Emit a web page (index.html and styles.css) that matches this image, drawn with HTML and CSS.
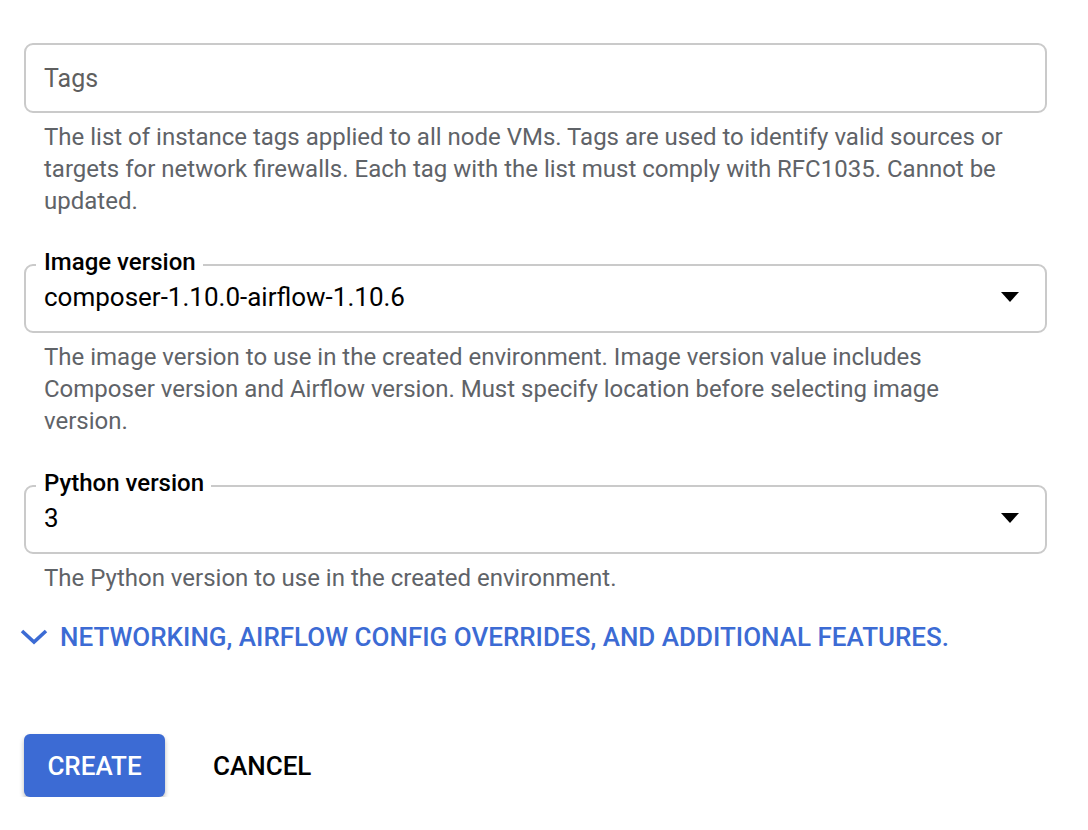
FILE: index.html
```html
<!DOCTYPE html>
<html>
<head>
<meta charset="utf-8">
<link rel="stylesheet" href="styles.css">
</head>
<body>
<div class="form">
  <div class="field">
    <div class="box plain"><span class="placeholder">Tags</span></div>
    <p class="help">The list of instance tags applied to all node VMs. Tags are used to identify valid sources or targets for network firewalls. Each tag with the list must comply with RFC1035. Cannot be updated.</p>
  </div>
  <div class="field middle">
    <fieldset class="box outlined">
      <legend class="label">Image version</legend>
      <div class="select-row"><span class="value">composer-1.10.0-airflow-1.10.6</span><span class="arrow"></span></div>
    </fieldset>
    <p class="help">The image version to use in the created environment. Image version value includes Composer version and Airflow version. Must specify location before selecting image version.</p>
  </div>
  <div class="field last">
    <fieldset class="box outlined">
      <legend class="label">Python version</legend>
      <div class="select-row"><span class="value">3</span><span class="arrow"></span></div>
    </fieldset>
    <p class="help">The Python version to use in the created environment.</p>
  </div>
  <div class="expander">
    <svg class="chev" width="28" height="18" viewBox="0 0 28 18"><path d="M2 3 L14 14 L26 3" fill="none" stroke="#3c6bd4" stroke-width="3.6"/></svg>
    <span>NETWORKING, AIRFLOW CONFIG OVERRIDES, AND ADDITIONAL FEATURES.</span>
  </div>
  <div class="actions">
    <button class="btn primary">CREATE</button>
    <button class="btn flat">CANCEL</button>
  </div>
</div>
</body>
</html>
```
FILE: styles.css
```css
html, body {
  margin: 0;
  padding: 0;
  background: #fff;
}
body {
  font-family: Roboto, "Liberation Sans", sans-serif;
}
.form {
  width: 1023px;
  padding: 43px 0 0 24px;
}
.field {
  margin-bottom: 31px;
}
.field.middle {
  margin-bottom: 32px;
}
.field.last {
  margin-bottom: 27px;
}
.box {
  box-sizing: border-box;
  border: 2px solid #cacaca;
  border-radius: 9px;
  margin: 0;
}
.plain {
  height: 70px;
  padding: 0 18px;
  display: flex;
  align-items: center;
}
.placeholder {
  font-size: 25px;
  color: #5f5f5f;
}
.outlined {
  padding: 0 26px 0 18px;
  height: 85px;
  min-width: 0;
}
.label {
  font-size: 24px;
  font-weight: 500;
  color: #000;
  line-height: 28px;
  padding: 0 7px 6px 8px;
  margin-left: -8px;
}
.select-row {
  display: flex;
  align-items: center;
  justify-content: space-between;
  height: 36px;
  margin-top: -3px;
}
.value {
  font-size: 26px;
  color: #000;
}
.arrow {
  width: 0;
  height: 0;
  border-left: 9px solid transparent;
  border-right: 9px solid transparent;
  border-top: 10px solid #000;
}
.help {
  margin: 8px 0 0 0;
  padding: 0 26px 0 20px;
  font-size: 24px;
  line-height: 32px;
  color: #5f6368;
}
.expander {
  display: flex;
  align-items: center;
  gap: 12px;
  margin-left: -4px;
  color: #3c6bd4;
  font-size: 26px;
  font-weight: 500;
  height: 32px;
}
.chev {
  display: block;
}
.actions {
  display: flex;
  align-items: center;
  gap: 22px;
  margin-top: 81px;
}
.btn {
  font-family: Roboto, "Liberation Sans", sans-serif;
  font-size: 26px;
  font-weight: 500;
  border: none;
  cursor: pointer;
}
.primary {
  background: #3c6bd4;
  color: #fff;
  width: 141px;
  height: 63px;
  border-radius: 6px;
  box-shadow: 0 3px 5px rgba(0,0,0,0.28);
}
.flat {
  background: transparent;
  color: #000;
  padding: 0 26px;
  height: 63px;
}
```
